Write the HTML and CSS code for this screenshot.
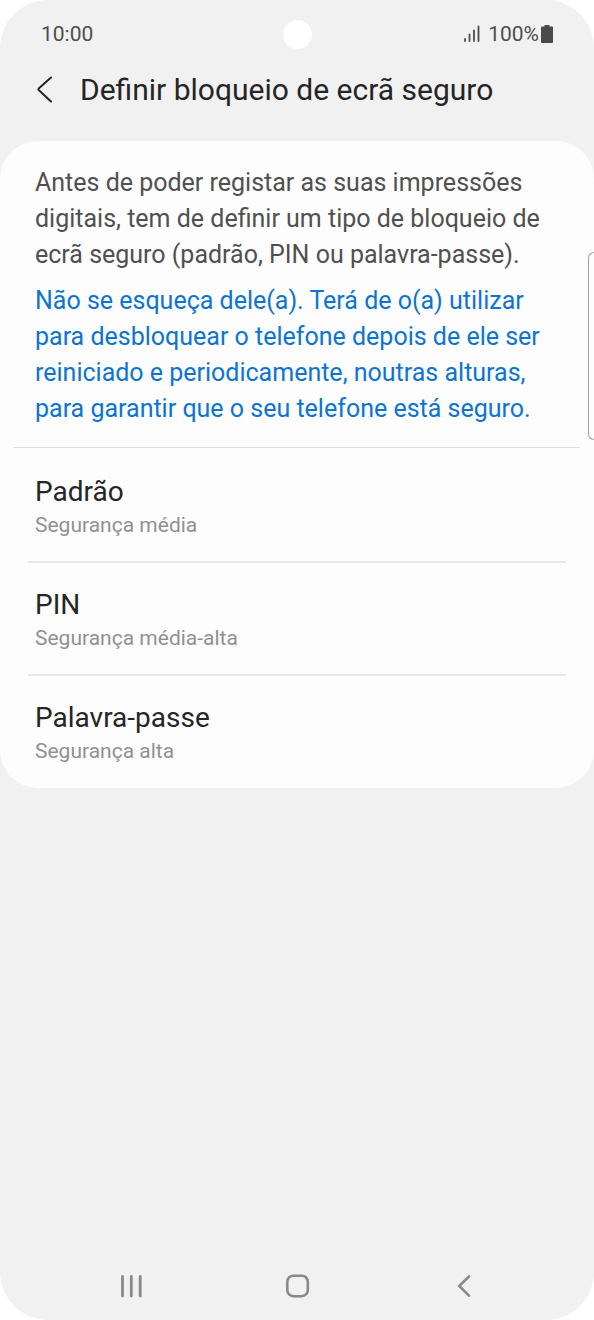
FILE: index.html
```html
<!DOCTYPE html>
<html lang="pt">
<head>
<meta charset="utf-8">
<meta name="viewport" content="width=device-width, initial-scale=1">
<title>Definir bloqueio de ecrã seguro</title>
<link rel="stylesheet" href="styles.css">
</head>
<body>
<div class="phone">
  <div class="status">
    <span class="status-time">10:00</span>
    <span class="status-camera"></span>
    <span class="status-right">
      <svg class="signal" width="18" height="18" viewBox="0 0 18 18" aria-hidden="true"><path d="M2 14V16M6.500 9.500V16M11 5.500V16M15.500 1.500V16" fill="none" stroke="#4d4d4d" stroke-width="1.800" stroke-linecap="round"/></svg>
      <span>100%</span>
      <svg class="battery" width="12" height="19" viewBox="0 0 12 19" aria-hidden="true"><path d="M3.500 0h5v1.500h2.500q1 0 1 1v14.500q0 1-1 1h-10q-1 0-1-1v-14.500q0-1 1-1h2.500z" fill="#4a4a4a"/></svg>
    </span>
  </div>
  <header class="header">
    <button class="back" type="button" aria-label="Voltar">
      <svg width="18" height="28" viewBox="0 0 18 28" aria-hidden="true"><path d="M15 1.500L2.700 12.500Q2 13.200 2.700 14L15 25.500" fill="none" stroke="#252525" stroke-width="2" stroke-linecap="round" stroke-linejoin="round"/></svg>
    </button>
    <h1 class="title">Definir bloqueio de ecrã seguro</h1>
  </header>
  <main class="card">
    <div class="intro">
      <p class="text">Antes de poder registar as suas impressões digitais, tem de definir um tipo de bloqueio de ecrã seguro (padrão, PIN ou palavra-passe).</p>
      <p class="text notice">Não se esqueça dele(a). Terá de o(a) utilizar para desbloquear o telefone depois de ele ser reiniciado e periodicamente, noutras alturas, para garantir que o seu telefone está seguro.</p>
    </div>
    <div class="options">
      <button class="option" type="button"><span class="option-name">Padrão</span><span class="option-level">Segurança média</span></button>
      <button class="option" type="button"><span class="option-name">PIN</span><span class="option-level">Segurança média-alta</span></button>
      <button class="option" type="button"><span class="option-name">Palavra-passe</span><span class="option-level">Segurança alta</span></button>
    </div>
    <span class="edge-handle"></span>
  </main>
  <nav class="nav">
    <button class="nav-button" type="button" aria-label="Recentes">
      <svg width="26" height="26" viewBox="0 0 26 26" aria-hidden="true"><path d="M4.500 3.500V23M13.300 3.500V23M22.200 3.500V23" fill="none" stroke="#8a8a8a" stroke-width="2.800" stroke-linecap="round"/></svg>
    </button>
    <button class="nav-button" type="button" aria-label="Início">
      <svg width="26" height="26" viewBox="0 0 26 26" aria-hidden="true"><rect x="3.300" y="2.700" width="20.500" height="20.500" rx="6" fill="none" stroke="#8a8a8a" stroke-width="2.600"/></svg>
    </button>
    <button class="nav-button" type="button" aria-label="Anterior">
      <svg width="26" height="26" viewBox="0 0 26 26" aria-hidden="true"><path d="M19 3.500L9.200 13L19 22.700" fill="none" stroke="#8a8a8a" stroke-width="2.600" stroke-linecap="round"/></svg>
    </button>
  </nav>
</div>
</body>
</html>
```
FILE: styles.css
```css
* {
  box-sizing: border-box;
}

body {
  margin: 0;
  background: #ffffff;
  font-family: Roboto, "Noto Sans", sans-serif;
  color: #252525;
}

button {
  margin: 0;
  padding: 0;
  border: 0;
  background: none;
  color: inherit;
  font: inherit;
  text-align: left;
  cursor: pointer;
}

svg {
  display: block;
}

.phone {
  display: flex;
  flex-direction: column;
  min-height: 100vh;
  overflow: hidden;
  border-radius: 48px;
  background: #f1f1f1;
}

.status {
  display: grid;
  grid-template-columns: 1fr auto 1fr;
  align-items: center;
  height: 68px;
  padding: 0 41px;
  font-size: 21px;
  line-height: 28px;
  color: #4d4d4d;
}

.status-camera {
  width: 29px;
  height: 29px;
  border-radius: 50%;
  background: #ffffff;
}

.status-right {
  display: flex;
  align-items: center;
  justify-content: flex-end;
}

.signal {
  margin-right: 7px;
}

.battery {
  margin-left: 2px;
}

.header {
  display: flex;
  align-items: center;
  gap: 26px;
  height: 44px;
  padding: 0 36px;
}

.title {
  margin: 0;
  font-size: 30px;
  font-weight: 400;
  line-height: 40px;
}

.card {
  position: relative;
  margin-top: 29px;
  border-radius: 38px;
  background: #fdfdfd;
}

.intro {
  margin: 0 14px;
  padding: 24px 21px 20px;
  border-bottom: 1px solid #dedede;
}

.text {
  margin: 0;
  font-size: 25px;
  line-height: 36px;
  color: #505050;
}

.notice {
  margin-top: 10px;
  color: #0d74d1;
}

.options {
  display: flex;
  flex-direction: column;
  padding: 2px 28px 1px;
}

.option {
  display: flex;
  flex-direction: column;
  padding: 24px 7px 21px;
}

.option + .option {
  border-top: 2px solid #e8e8e8;
}

.option-name {
  font-size: 28px;
  line-height: 36px;
}

.option-level {
  font-size: 21px;
  line-height: 30px;
  color: #919191;
}

.edge-handle {
  position: absolute;
  top: 111px;
  right: 0;
  width: 6px;
  height: 188px;
  border: 1px solid #a0a0a0;
  border-right: 0;
  border-radius: 6px 0 0 6px;
}

.nav {
  display: flex;
  justify-content: space-between;
  margin-top: auto;
  padding: 0 118px 21px;
}
```
